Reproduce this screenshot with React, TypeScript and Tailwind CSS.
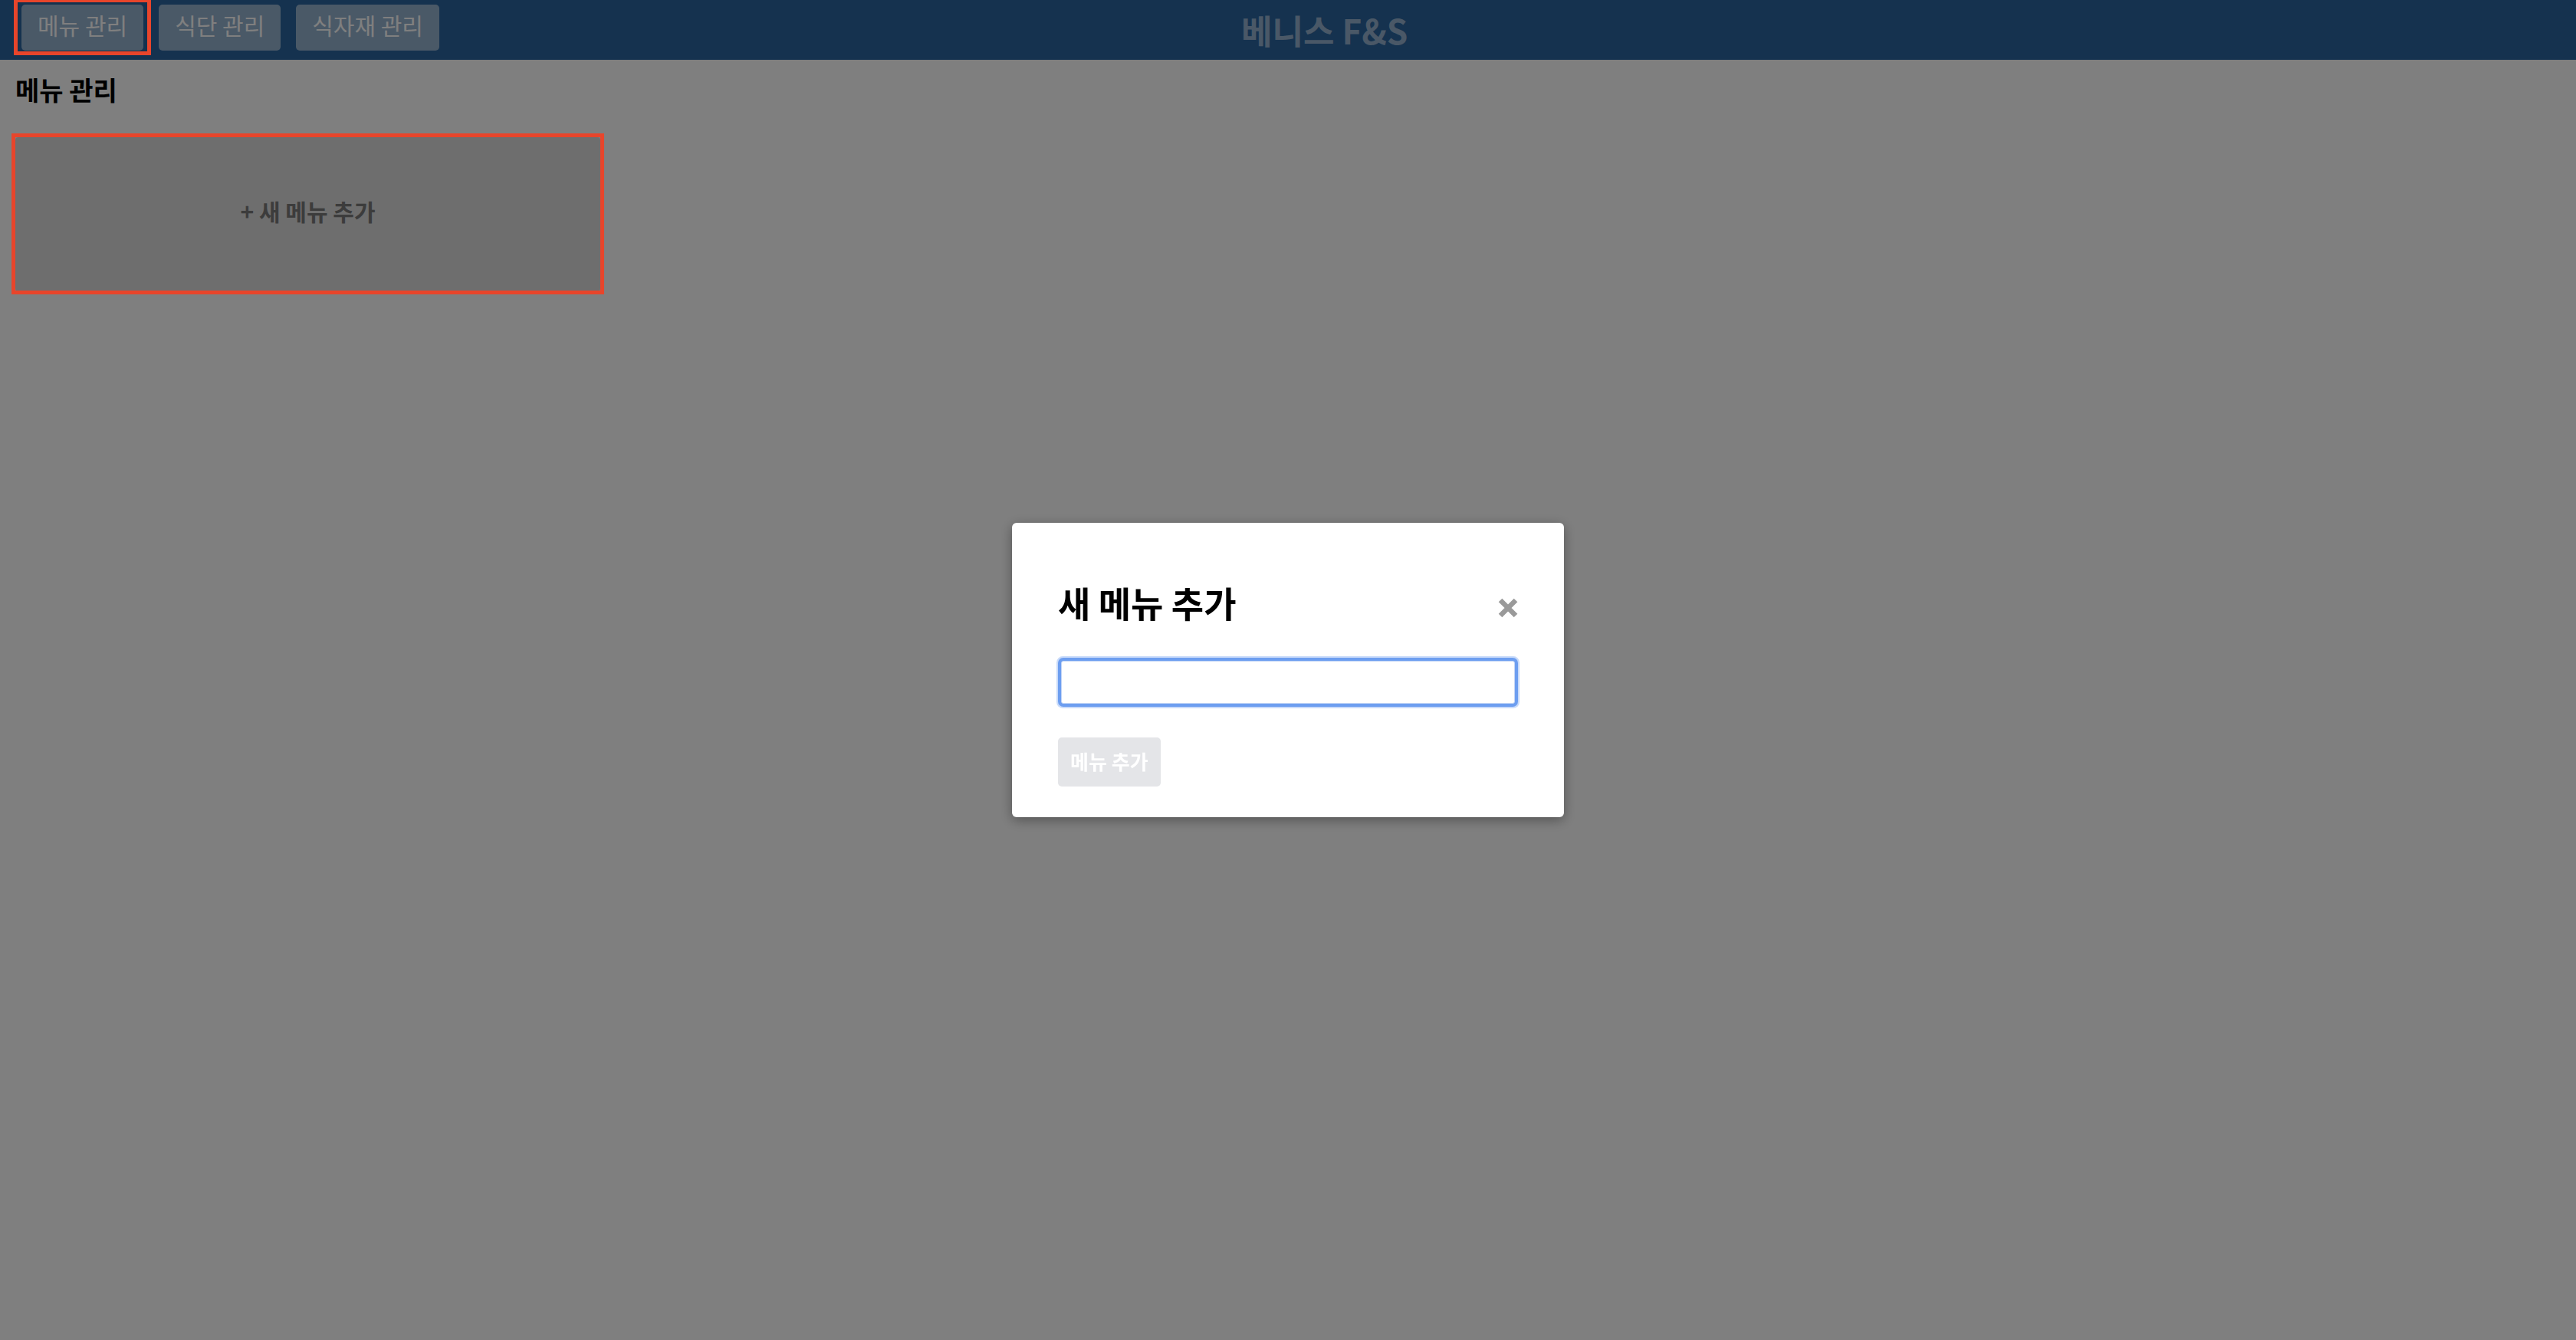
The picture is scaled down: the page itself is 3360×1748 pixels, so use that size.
import { useState } from "react";

const navItems = ["메뉴 관리", "식단 관리", "식자재 관리"];

function CloseIcon() {
    return (
        <svg width="26" height="26" viewBox="0 0 26 26" fill="none">
            <path d="M3 3L23 23M23 3L3 23" stroke="#9a9a9a" strokeWidth="6.5" />
        </svg>
    );
}

export default function App() {
    const [name, setName] = useState("");

    return (
        <div className="relative min-h-screen bg-white font-['Noto_Sans_CJK_KR','Noto_Sans',sans-serif]">
            <header className="flex h-[78px] items-center bg-[#2a649e] px-[28px]">
                <nav className="mt-[6px] flex gap-[20px] self-start">
                    {navItems.map((item, index) => (
                        <div key={item} className="relative">
                            <button className="flex h-[60px] items-center rounded-[5px] bg-white/50 px-[21px] pb-[8px] text-[30px] text-white">
                                {item}
                            </button>
                            {index === 0 && (
                                <div className="pointer-events-none absolute -left-[10px] -right-[10px] -top-[8px] -bottom-[6px] z-20 border-[5px] border-[#e8452b]" />
                            )}
                        </div>
                    ))}
                </nav>
                <h1 className="ml-[1046px] text-[44px] font-bold leading-[50px] text-white/50">베니스 F&amp;S</h1>
            </header>

            <main className="p-[20px]">
                <h2 className="mb-[43px] text-[34px] font-bold leading-[38px] text-black">메뉴 관리</h2>
                <div className="grid grid-cols-[repeat(auto-fill,763px)] gap-[40px]">
                    <div className="relative">
                        <button className="flex h-[201px] w-full items-center justify-center rounded-[4px] bg-[#dcdcdc] pb-[8px] text-[30px] font-bold text-[#787878]">
                            + 새 메뉴 추가
                        </button>
                        <div className="pointer-events-none absolute -left-[5px] -right-[5px] -top-[5px] -bottom-[4px] z-20 border-[5px] border-[#e8452b]" />
                    </div>
                </div>
            </main>

            <div className="fixed inset-0 z-10 flex items-center justify-center bg-black/50">
                <div className="w-[720px] rounded-[6px] bg-white px-[60px] pb-[40px] pt-[75px] shadow-[0_4px_16px_rgba(0,0,0,0.35)]">
                    <div className="flex items-center justify-between">
                        <h3 className="text-[46px] font-bold leading-[56px] text-black">새 메뉴 추가</h3>
                        <button className="mt-[16px] flex h-[26px] w-[26px] items-center justify-center">
                            <CloseIcon />
                        </button>
                    </div>
                    <input
                        value={name}
                        onChange={(e) => setName(e.target.value)}
                        className="mx-[4px] mt-[49px] block h-[56px] w-[592px] rounded-[3px] border border-[#c2d5f5] bg-white px-[10px] text-[28px] outline-none shadow-[0_0_0_4px_#6d9ef0,0_0_0_6px_#c9dbfa]"
                    />
                    <button
                        disabled={name.length === 0}
                        className="mt-[44px] flex h-[64px] items-center rounded-[5px] bg-[#e4e5e8] px-[16px] pb-[4px] text-[26px] font-bold text-white"
                    >
                        메뉴 추가
                    </button>
                </div>
            </div>
        </div>
    );
}
